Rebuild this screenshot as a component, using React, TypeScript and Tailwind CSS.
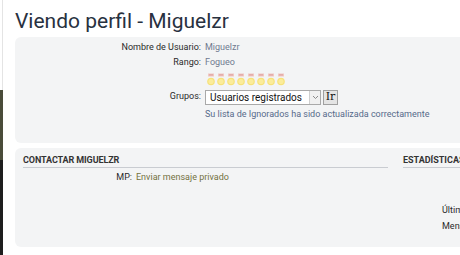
import React from "react";

const RankIcon: React.FC = () => (
  <svg width="10" height="13" viewBox="0 0 10 13">
    <rect x="2" y="0.5" width="6" height="3" fill="#f0c8c4" />
    <rect x="3" y="1.2" width="4" height="1.4" fill="#e3a9a4" />
    <circle cx="5" cy="8.5" r="3.8" fill="#f6e27a" />
    <circle cx="5" cy="8.5" r="2.6" fill="#fbec9a" />
  </svg>
);

const Row: React.FC<{ label: string; children: React.ReactNode; className?: string }> = ({
  label,
  children,
  className = "",
}) => (
  <div className={`flex items-center ${className}`}>
    <div className="w-[190px] shrink-0 pr-[4px] text-right text-[#2a2a2a]">{label}</div>
    <div className="flex-1">{children}</div>
  </div>
);

export default function App() {
  return (
    <div
      className="w-[460px] h-[255px] overflow-hidden bg-white flex text-[9px]"
      style={{ fontFamily: "Roboto, 'Noto Sans', sans-serif" }}
    >
      <div className="w-[3px] shrink-0 flex flex-col">
        <div className="h-[90px] border-r border-[#e4e4e4] bg-white" />
        <div className="h-[70px] bg-[#4a4c3a]" />
        <div className="flex-1 bg-[#1e1e1e]" />
      </div>
      <div className="flex-1 pl-[12px] min-w-0">
        <h2 className="h-[37px] pt-[9px] text-[21px] leading-[24px] text-[#28313f] whitespace-nowrap">
          Viendo perfil - Miguelzr
        </h2>

        <div className="w-[460px] h-[106px] bg-[#f3f4f5] rounded-l-[6px] pt-[3px]">
          <Row label="Nombre de Usuario:" className="h-[15px]">
            <span className="text-[#6f7a90]">Miguelzr</span>
          </Row>
          <Row label="Rango:" className="h-[15px]">
            <span className="text-[#6f7a90]">Fogueo</span>
          </Row>
          <Row label="" className="h-[17px]">
            <div className="flex pl-[1px] pt-[1px]">
              {Array.from({ length: 8 }).map((_, i) => (
                <RankIcon key={i} />
              ))}
            </div>
          </Row>
          <Row label="Grupos:" className="h-[20px]">
            <div className="flex items-center gap-[2px]">
              <div className="w-[116px] h-[15px] bg-white border border-[#a9a9a9] flex items-center">
                <span className="flex-1 pl-[4px] text-[10px] leading-[13px] text-[#111] whitespace-nowrap overflow-hidden">
                  Usuarios registrados
                </span>
                <div className="w-[11px] h-[13px] bg-[#f0f0f0] border-l border-[#cfcfcf] flex items-center justify-center">
                  <svg width="7" height="5" viewBox="0 0 7 5">
                    <path d="M1 1 L3.5 3.5 L6 1" stroke="#8a8a8a" strokeWidth="1" fill="none" />
                  </svg>
                </div>
              </div>
              <div
                className="w-[15px] h-[15px] bg-[#e4e4e4] border border-[#a0a0a0] flex items-center justify-center text-[11px] text-[#111]"
                style={{ fontFamily: "'DejaVu Serif', serif" }}
              >
                Ir
              </div>
            </div>
          </Row>
          <Row label="" className="h-[16px]">
            <span className="text-[#566a8a]">Su lista de Ignorados ha sido actualizada correctamente</span>
          </Row>
        </div>

        <div className="mt-[5px] w-[460px] h-[99px] bg-[#f3f4f5] rounded-l-[6px] pt-[7px] pl-[8px] flex">
          <div className="w-[365px] shrink-0">
            <div className="h-[13px] border-b border-[#c9ccd1] font-bold text-[9px] leading-[10px] text-[#333] tracking-[-0.1px]">
              CONTACTAR MIGUELZR
            </div>
            <div className="flex items-center h-[19px]">
              <div className="w-[113px] pr-[4px] text-right text-[#2a2a2a]">MP:</div>
              <span className="text-[#74723f]">Enviar mensaje privado</span>
            </div>
          </div>
          <div className="ml-[15px] flex-1 min-w-0">
            <div className="h-[13px] border-b border-[#c9ccd1] font-bold text-[9px] leading-[10px] text-[#333] whitespace-nowrap">
              ESTADÍSTICAS
            </div>
            <div className="pl-[39px] pt-[34px] text-[#2a2a2a] leading-[16px] whitespace-nowrap">
              <div>Últimas</div>
              <div>Mensajes</div>
            </div>
          </div>
        </div>
      </div>
    </div>
  );
}
